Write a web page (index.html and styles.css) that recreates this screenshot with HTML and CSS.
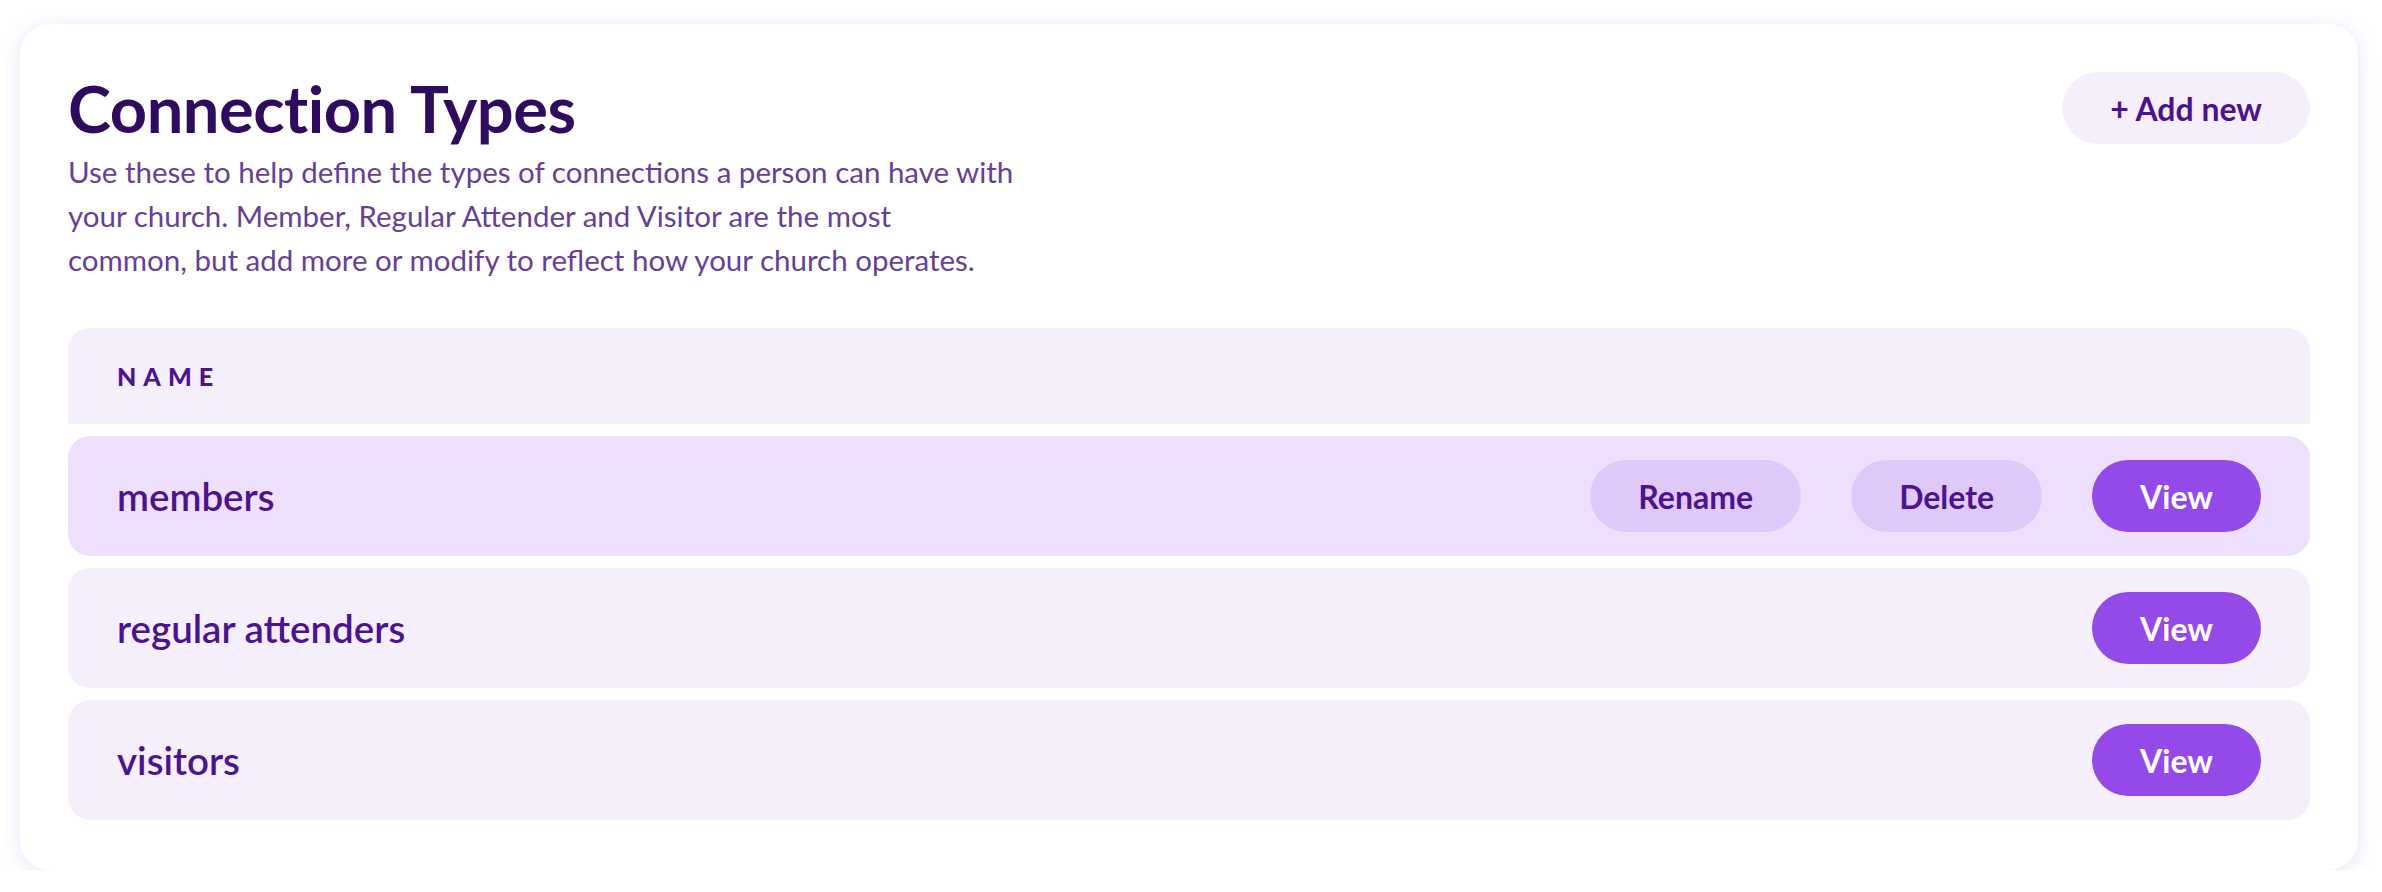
FILE: index.html
```html
<!DOCTYPE html>
<html lang="en">

<head>
    <meta charset="UTF-8">
    <title>Connection Types</title>
    <link rel="stylesheet" href="styles.css">
</head>

<body>
    <!-- 卡片 -->
    <div class="card">
        <div class="card-head">
            <div class="intro">
                <h1 class="title">Connection Types</h1>
                <p class="desc">Use these to help define the types of connections a person can have with<br>
                    your church. Member, Regular Attender and Visitor are the most<br>
                    common, but add more or modify to reflect how your church operates.</p>
            </div>
            <button class="btn btn-soft">+ Add new</button>
        </div>

        <!-- 列表 -->
        <div class="table">
            <div class="thead">NAME</div>
            <div class="row row-active">
                <span class="name">members</span>
                <div class="actions">
                    <button class="btn btn-light">Rename</button>
                    <button class="btn btn-light">Delete</button>
                    <button class="btn btn-main">View</button>
                </div>
            </div>
            <div class="row">
                <span class="name">regular attenders</span>
                <div class="actions">
                    <button class="btn btn-main">View</button>
                </div>
            </div>
            <div class="row">
                <span class="name">visitors</span>
                <div class="actions">
                    <button class="btn btn-main">View</button>
                </div>
            </div>
        </div>
    </div>
</body>

</html>
```

FILE: styles.css
```css
/* 去掉默认效果 */

* {
    margin: 0;
    padding: 0;
    box-sizing: border-box;
}

body {
    background: #fff;
    font-family: Lato, "Liberation Sans", sans-serif;
}

.card {
    margin: 24px 24px 0 20px;
    padding: 48px 48px 50px;
    background: #fff;
    border-radius: 30px;
    box-shadow: 0 3px 20px rgba(110, 70, 190, 0.16);
}

.card-head {
    display: flex;
    justify-content: space-between;
    align-items: flex-start;
}

.title {
    font-size: 65px;
    line-height: 72px;
    font-weight: 700;
    color: #2e0b5f;
    letter-spacing: -0.5px;
}

.desc {
    margin-top: 6px;
    font-size: 29.5px;
    line-height: 44px;
    color: #673f98;
}

/* 按钮 */

.btn {
    height: 72px;
    padding: 0 48px;
    border: none;
    border-radius: 36px;
    font-family: inherit;
    font-size: 32px;
    font-weight: 700;
    cursor: pointer;
}

.btn-soft {
    background: #f5effc;
    color: #4c1391;
}

.btn-light {
    background: #dfc9f9;
    color: #4c1391;
}

.btn-main {
    background: #944ae8;
    color: #fff;
}

/* 表格 */

.table {
    margin-top: 46px;
    display: flex;
    flex-direction: column;
    gap: 12px;
}

.thead {
    height: 96px;
    display: flex;
    align-items: center;
    padding-left: 49px;
    background: #f5effc;
    border-radius: 22px 22px 0 0;
    font-size: 25px;
    font-weight: 900;
    letter-spacing: 7px;
    color: #4c1391;
}

.row {
    height: 120px;
    display: flex;
    align-items: center;
    justify-content: space-between;
    padding: 0 49px;
    background: #f5effc;
    border-radius: 22px;
}

.row-active {
    background: #eedffc;
}

.name {
    font-size: 38.5px;
    font-weight: 600;
    color: #4c1391;
}

.actions {
    display: flex;
    gap: 50px;
}
```
